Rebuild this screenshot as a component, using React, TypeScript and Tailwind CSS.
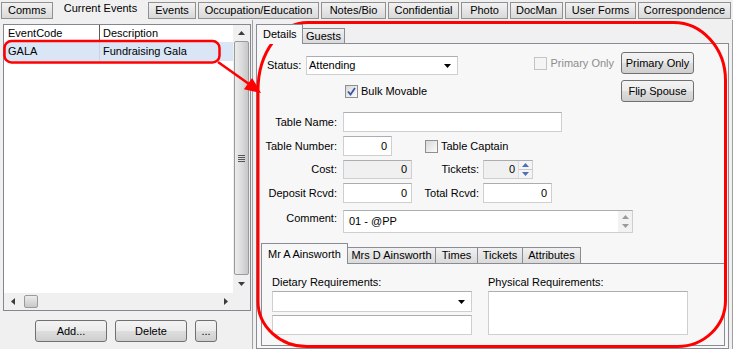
const TOP_TABS = [
  { label: "Comms", w: 52 },
  { label: "Current Events", w: 91, active: true },
  { label: "Events", w: 48 },
  { label: "Occupation/Education", w: 121 },
  { label: "Notes/Bio", w: 65 },
  { label: "Confidential", w: 71 },
  { label: "Photo", w: 47 },
  { label: "DocMan", w: 53 },
  { label: "User Forms", w: 71 },
  { label: "Correspondence", w: 93 },
];

const PERSON_TABS = [
  { label: "Mr A Ainsworth", w: 87, active: true },
  { label: "Mrs D Ainsworth", w: 88 },
  { label: "Times", w: 42 },
  { label: "Tickets", w: 45 },
  { label: "Attributes", w: 58 },
];

const Arrow = ({ dir, color = "#3c3c3c" }: { dir: "up" | "down" | "left" | "right"; color?: string }) => {
  const pts = {
    up: "0,4 7,4 3.5,0",
    down: "0,0 7,0 3.5,4",
    left: "4,0 4,7 0,3.5",
    right: "0,0 0,7 4,3.5",
  }[dir];
  const vertical = dir === "up" || dir === "down";
  return (
    <svg width={vertical ? 7 : 4} height={vertical ? 4 : 7} className="block">
      <polygon points={pts} fill={color} />
    </svg>
  );
};

const CheckBox = ({ checked, disabled }: { checked?: boolean; disabled?: boolean }) =>
  disabled ? (
    <div className="w-[13px] h-[13px] border border-[#c4c4c4] bg-[#f4f4f4]" />
  ) : (
    <div className="w-[13px] h-[13px] border border-[#8f8f8f] bg-gradient-to-br from-[#d8d8d8] to-[#fbfbfb] flex items-center justify-center">
      {checked && (
        <svg width="9" height="9" viewBox="0 0 9 9">
          <path d="M1 4.5 L3.5 7.5 L8 1" fill="none" stroke="#3a56a0" strokeWidth="1.8" />
        </svg>
      )}
    </div>
  );

const Button = ({ children, w }: { children: React.ReactNode; w: string }) => (
  <div
    className={`${w} h-[22px] rounded-[3px] border border-[#707070] bg-[linear-gradient(#f3f3f3_0%,#ebebeb_50%,#dddddd_51%,#cfcfcf_100%)] flex items-center justify-center whitespace-nowrap`}
  >
    {children}
  </div>
);

const Field = ({ w, h = "h-[20px]", value, grey }: { w: string; h?: string; value?: string; grey?: boolean }) => (
  <div
    className={`${w} ${h} border border-[#cfcfcf] border-t-[#abadb3] ${grey ? "bg-[#f0f0f0]" : "bg-white"} flex items-center justify-end pr-[4px]`}
  >
    {value}
  </div>
);

const Label = ({ children, w }: { children: React.ReactNode; w: string }) => (
  <div className={`${w} text-right shrink-0 whitespace-nowrap`}>{children}</div>
);

export default function App() {
  return (
    <div className="relative w-[733px] h-[349px] overflow-hidden bg-[#f0f0f0] font-['Liberation_Sans',Arial,sans-serif] text-[11px] leading-[13px] text-black flex flex-col">
      {/* top tabs */}
      <div className="h-[20px] flex items-end gap-[2px] pl-[1px] shrink-0">
        {TOP_TABS.map((t) =>
          t.active ? (
            <div key={t.label} style={{ width: t.w }} className="h-[20px] pt-[2px] text-center whitespace-nowrap">
              {t.label}
            </div>
          ) : (
            <div
              key={t.label}
              style={{ width: t.w }}
              className="h-[17px] mb-[1px] border border-[#919191] bg-gradient-to-b from-[#f2f2f2] to-[#d9d9d9] flex items-center justify-center whitespace-nowrap"
            >
              {t.label}
            </div>
          )
        )}
      </div>

      <div className="flex flex-1 min-h-0">
        {/* left pane */}
        <div className="w-[253px] shrink-0 border-r border-[#a0a0a0] flex flex-col pt-[4px] pl-[3px]">
          <div className="w-[248px] h-[287px] border border-[#828790] bg-white flex flex-col">
            <div className="flex flex-1 min-h-0">
              <div className="flex-1">
                <div className="h-[17px] flex items-center">
                  <div className="w-[96px] pl-[4px] h-full flex items-center border-r border-[#5a5a5a]">EventCode</div>
                  <div className="pl-[3px]">Description</div>
                </div>
                <div className="h-[19px] flex items-center bg-[#dae6f5]">
                  <div className="w-[96px] pl-[4px] h-full flex items-center border-r border-[#c8d4e4]">GALA</div>
                  <div className="pl-[3px]">Fundraising Gala</div>
                </div>
              </div>
              <div className="w-[17px] bg-[#f0f0f0] flex flex-col">
                <div className="h-[16px] flex items-center justify-center">
                  <Arrow dir="up" />
                </div>
                <div className="flex-1 mx-[1px] rounded-[2px] border border-[#9a9a9a] bg-gradient-to-r from-[#ececec] via-[#dcdcdc] to-[#c6c6c6] flex flex-col items-center justify-center gap-[1px]">
                  <div className="w-[7px] h-px bg-[#555]" />
                  <div className="w-[7px] h-px bg-[#555]" />
                  <div className="w-[7px] h-px bg-[#555]" />
                  <div className="w-[7px] h-px bg-[#555]" />
                </div>
                <div className="h-[18px] flex items-center justify-center">
                  <Arrow dir="down" />
                </div>
              </div>
            </div>
            <div className="h-[17px] flex">
              <div className="flex-1 bg-[#f0f0f0] flex items-center">
                <div className="w-[17px] flex justify-center">
                  <Arrow dir="left" />
                </div>
                <div className="w-[14px] h-[13px] ml-[3px] rounded-[2px] border border-[#9a9a9a] bg-gradient-to-b from-[#ececec] to-[#c8c8c8]" />
                <div className="flex-1" />
                <div className="w-[14px] flex justify-center">
                  <Arrow dir="right" />
                </div>
              </div>
              <div className="w-[17px] bg-[#f0f0f0]" />
            </div>
          </div>
          <div className="mt-[9px] flex gap-[8px] pl-[32px]">
            <Button w="w-[72px]">Add...</Button>
            <Button w="w-[72px]">Delete</Button>
            <Button w="w-[22px]">...</Button>
          </div>
        </div>

        {/* right pane */}
        <div className="flex-1 flex flex-col pl-[3px] pr-[3px] pt-[4px] border-r border-[#a0a0a0]">
          <div className="h-[19px] flex items-end shrink-0">
            <div className="relative z-10 w-[47px] h-[20px] -mb-px border border-b-0 border-[#898c95] bg-[#f7f7f7] pl-[6px] pt-[3px]">
              Details
            </div>
            <div className="w-[42px] h-[15px] border border-l-0 border-b-0 border-[#898c95] bg-gradient-to-b from-[#f0f0f0] to-[#dadada] flex items-center justify-center">
              Guests
            </div>
          </div>
          <div className="flex-1 border border-[#898c95] bg-[#f7f7f7] flex flex-col pt-[8px]">
            {/* status + buttons */}
            <div className="flex justify-between pr-[34px]">
              <div className="pl-[10px]">
                <div className="mt-[4px] flex items-center">
                  <div className="w-[39px]">Status:</div>
                  <div className="w-[152px] h-[19px] border border-[#cfcfcf] border-t-[#abadb3] bg-white flex items-center pl-[2px] pr-[6px] justify-between">
                    <span>Attending</span>
                    <Arrow dir="down" color="#000" />
                  </div>
                </div>
                <div className="mt-[10px] ml-[78px] flex items-center gap-[3px]">
                  <CheckBox checked />
                  <span>Bulk Movable</span>
                </div>
              </div>
              <div className="flex flex-col items-end">
                <div className="flex items-center">
                  <CheckBox disabled />
                  <span className="ml-[3px] mr-[7px] text-[#8d8d8d]">Primary Only</span>
                  <Button w="w-[73px]">Primary Only</Button>
                </div>
                <div className="mt-[6px]">
                  <Button w="w-[73px]">Flip Spouse</Button>
                </div>
              </div>
            </div>

            {/* fields */}
            <div className="mt-[10px] flex flex-col">
              <div className="flex items-center gap-[6px]">
                <Label w="w-[80px]">Table Name:</Label>
                <Field w="w-[219px]" />
              </div>
              <div className="mt-[4px] flex items-center gap-[6px]">
                <Label w="w-[80px]">Table Number:</Label>
                <Field w="w-[49px]" value="0" />
                <div className="ml-[27px] flex items-center gap-[3px]">
                  <CheckBox />
                  <span>Table Captain</span>
                </div>
              </div>
              <div className="mt-[4px] flex items-center">
                <Label w="w-[80px]">Cost:</Label>
                <div className="ml-[6px]">
                  <Field w="w-[69px]" h="h-[19px]" value="0" grey />
                </div>
                <Label w="w-[67px]">Tickets:</Label>
                <div className="ml-[4px] w-[50px] h-[19px] border border-[#cfcfcf] border-t-[#abadb3] bg-[#f0f0f0] flex">
                  <div className="flex-1 text-right pr-[3px] leading-[17px]">0</div>
                  <div className="w-[14px] flex flex-col border-l border-[#dcdcdc] bg-[#f4f4f4]">
                    <div className="flex-1 flex items-center justify-center border-b border-[#c9c9c9]">
                      <Arrow dir="up" color="#4f6fb5" />
                    </div>
                    <div className="flex-1 flex items-center justify-center">
                      <Arrow dir="down" color="#4f6fb5" />
                    </div>
                  </div>
                </div>
              </div>
              <div className="mt-[4px] flex items-center">
                <Label w="w-[80px]">Deposit Rcvd:</Label>
                <div className="ml-[6px]">
                  <Field w="w-[69px]" value="0" />
                </div>
                <Label w="w-[67px]">Total Rcvd:</Label>
                <div className="ml-[4px]">
                  <Field w="w-[69px]" value="0" />
                </div>
              </div>
              <div className="mt-[7px] flex items-start gap-[6px]">
                <Label w="w-[80px]">
                  <div className="pt-[2px]">Comment:</div>
                </Label>
                <div className="w-[290px] h-[23px] border border-[#cfcfcf] border-t-[#abadb3] bg-white flex">
                  <div className="flex-1 pl-[5px] pt-[4px]">01 - @PP</div>
                  <div className="w-[14px] bg-[#f2f2f2] flex flex-col items-center justify-center gap-[5px]">
                    <Arrow dir="up" color="#9a9a9a" />
                    <Arrow dir="down" color="#9a9a9a" />
                  </div>
                </div>
              </div>
            </div>

            {/* person tabs */}
            <div className="mt-[10px] ml-[4px] mr-[3px] flex flex-col">
              <div className="h-[20px] flex items-end">
                {PERSON_TABS.map((t) =>
                  t.active ? (
                    <div
                      key={t.label}
                      style={{ width: t.w }}
                      className="relative z-10 h-[21px] -mb-px border border-b-0 border-[#898c95] bg-[#f7f7f7] pl-[6px] pt-[4px] whitespace-nowrap"
                    >
                      {t.label}
                    </div>
                  ) : (
                    <div
                      key={t.label}
                      style={{ width: t.w }}
                      className="h-[16px] border border-l-0 border-b-0 border-[#898c95] bg-gradient-to-b from-[#f0f0f0] to-[#dadada] flex items-center justify-center whitespace-nowrap"
                    >
                      {t.label}
                    </div>
                  )
                )}
              </div>
              <div className="h-[83px] border border-[#898c95] bg-[#f7f7f7] pl-[10px] pt-[12px] flex gap-[16px]">
                <div className="w-[200px] flex flex-col">
                  <div>Dietary Requirements:</div>
                  <div className="mt-[2px] h-[21px] border border-[#cfcfcf] border-t-[#abadb3] bg-white flex items-center justify-end pr-[6px]">
                    <Arrow dir="down" color="#000" />
                  </div>
                  <div className="mt-[3px] h-[20px] border border-[#cfcfcf] border-t-[#abadb3] bg-white" />
                </div>
                <div className="w-[200px] flex flex-col">
                  <div>Physical Requirements:</div>
                  <div className="mt-[2px] h-[44px] border border-[#cfcfcf] border-t-[#abadb3] bg-white" />
                </div>
              </div>
            </div>
          </div>
        </div>
      </div>

      {/* red annotations */}
      <svg className="absolute inset-0 pointer-events-none" width="733" height="349">
        <rect x="4.5" y="41" width="215" height="21.5" rx="7" fill="none" stroke="#ff0000" strokeWidth="2.5" />
        <line x1="218" y1="62" x2="249" y2="84" stroke="#ff0000" strokeWidth="2.5" />
        <polygon points="261,93 243.9,89.3 252.1,77.9" fill="#ff0000" />
        <path
          d="M 308 22.5 L 673 22.5 A 52 58 0 0 1 725.5 80.5 L 725.5 300.5 A 48 46 0 0 1 677.5 346.5 L 307 346.5 A 49 45 0 0 1 258 301.5 L 258 90 A 50 67.5 0 0 1 308 22.5 Z"
          fill="none"
          stroke="#ff0000"
          strokeWidth="3"
        />
      </svg>
    </div>
  );
}
